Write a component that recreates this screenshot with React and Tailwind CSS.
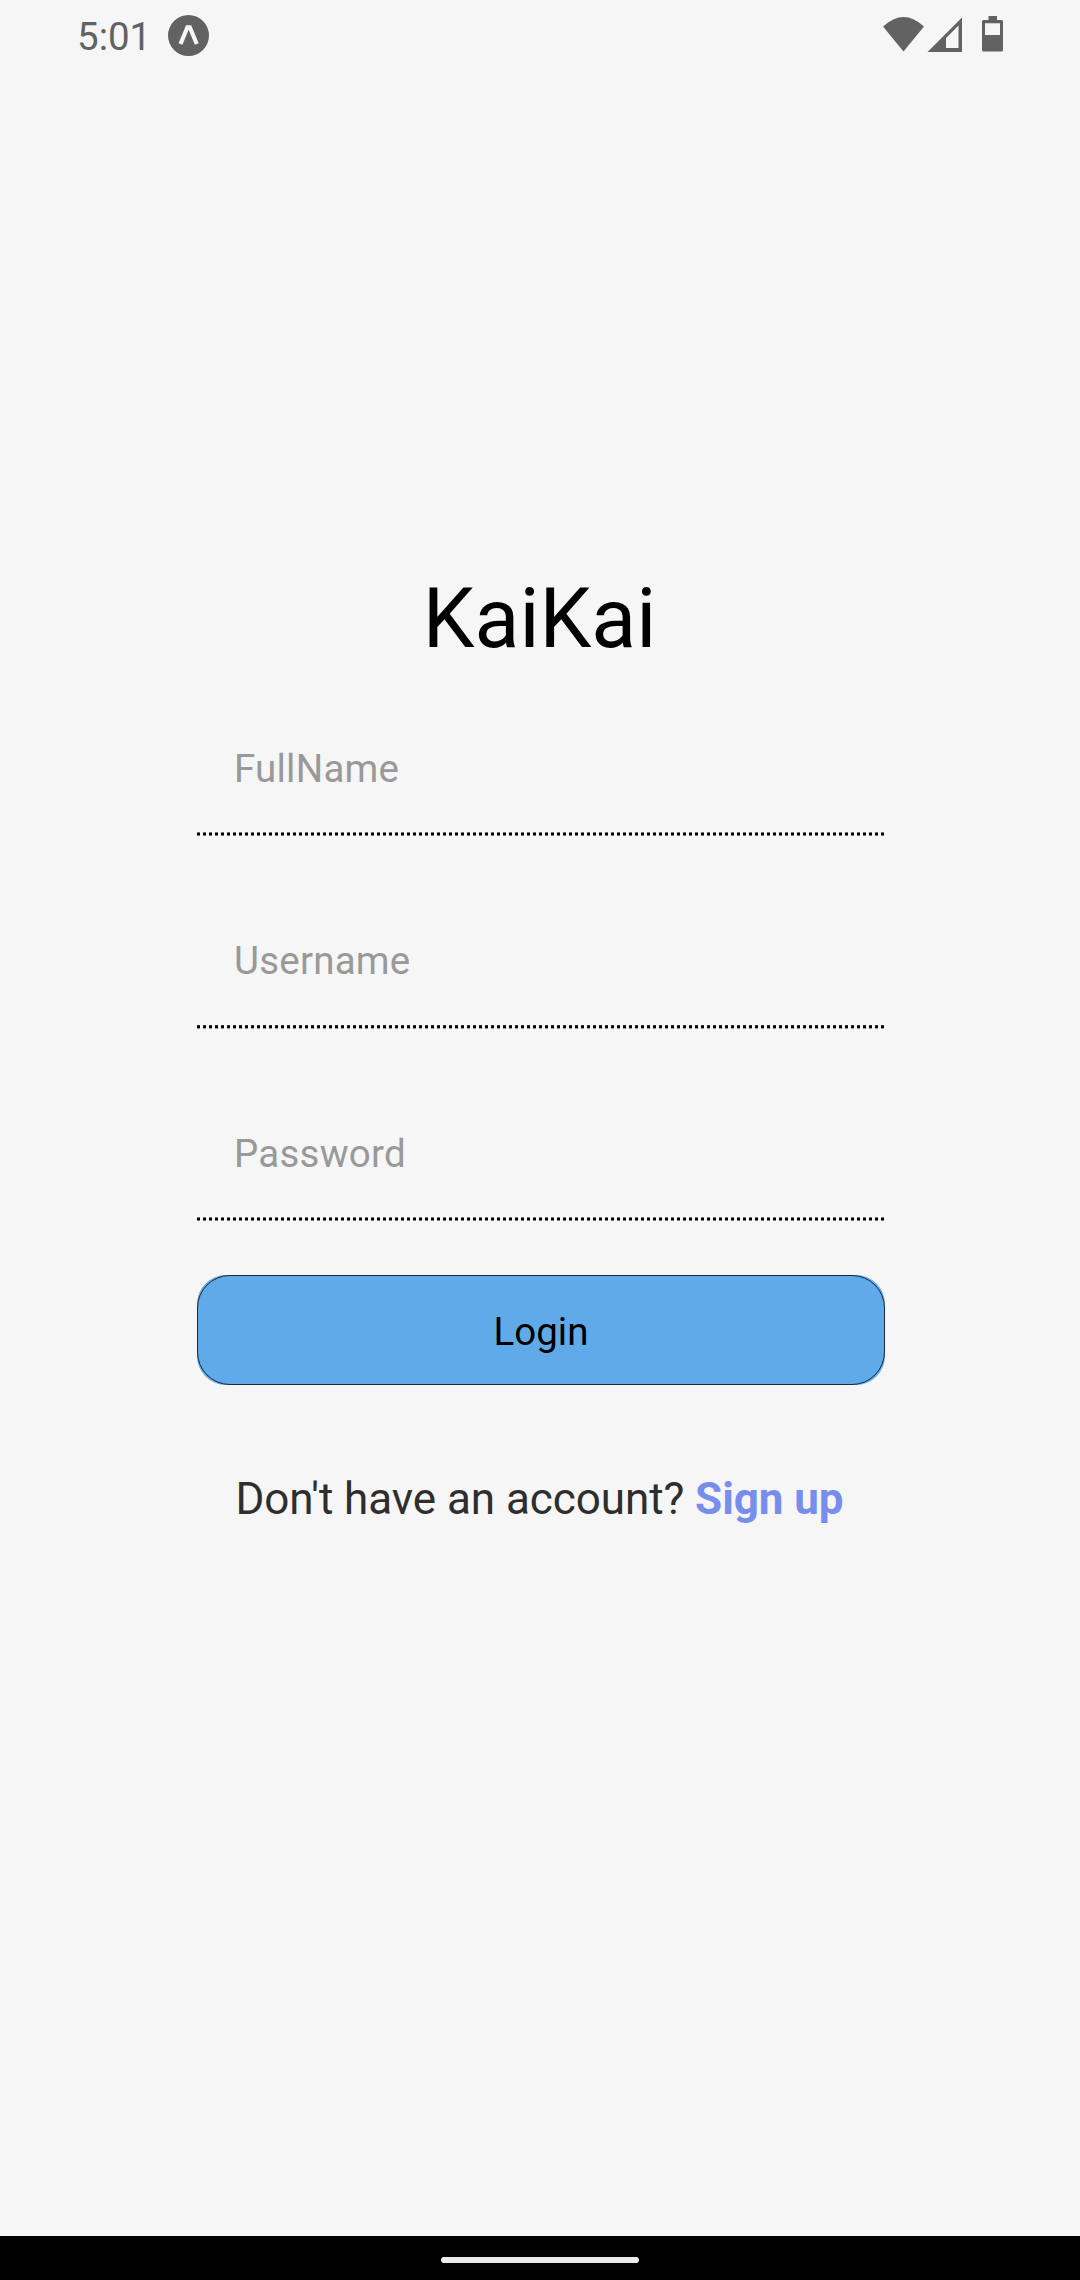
const DottedLine = ({ soft }) => (
  <div
    className={
      "h-1 w-full bg-[repeating-linear-gradient(to_right,#000_0_3px,transparent_3px_6px)] " +
      (soft
        ? "[mask-image:linear-gradient(#000000cc_1px,#000_1px,#000_3px,#00000066_3px)]"
        : "[mask-image:linear-gradient(#00000088_1px,#000_1px,#000_3px,#00000088_3px)]")
    }
  />
);

const Field = ({ label, type, tall }) => (
  <div className={`flex w-[688px] flex-col ${tall ? "gap-[42px]" : "gap-[41px]"}`}>
    <input
      type={type}
      placeholder={label}
      className="h-[45px] w-full bg-transparent pl-[37px] text-[38.5px] leading-[45px] tracking-[0.22px] text-black outline-none placeholder:text-[#999999]"
    />
    <DottedLine soft={tall} />
  </div>
);

export default function App() {
  return (
    <div className="flex h-[2280px] w-[1080px] flex-col bg-[#f6f6f6] font-[Roboto,sans-serif]">
      <header className="flex h-[72px] items-start justify-between pl-[77px] pr-[77px] text-[#626262]">
        <div className="flex items-start gap-[17px] pt-[14px]">
          <span className="w-[74px] text-[38.5px] leading-[45px]">5:01</span>
          <svg className="mt-px" width="41" height="41" viewBox="0 0 41 41">
            <circle cx="20.5" cy="20.5" r="20.5" fill="currentColor" />
            <path d="M12.5 29 19.4 12.3h2.4L28.8 29" fill="none" stroke="#f6f6f6" strokeWidth="4.2" />
          </svg>
        </div>
        <svg className="mt-[15px]" width="120" height="38" viewBox="883 15 120 38" fill="currentColor">
          <path d="M883 26.5Q903.5 7.5 924 26.5L903.5 51.5Z" />
          <path fillRule="evenodd" d="M927.5 52 962 17.500V52ZM946 48h12.500V25.500L946 38Z" />
          <path
            fillRule="evenodd"
            d="M988.500 16h8.500v4h4.500q1.500 0 1.500 1.500V50q0 1.500-1.500 1.500h-18q-1.500 0-1.500-1.500V21.500q0-1.500 1.500-1.500h5ZM985 23.300V35h15V23.300Z"
          />
        </svg>
      </header>
      <main className="flex flex-1 flex-col pl-[197px] pt-[496px]">
        <h1 className="w-[685px] text-center text-[82.5px] leading-[101px] text-black">KaiKai</h1>
        <div className="mt-[77px] flex flex-col gap-[102px]">
          <Field label="FullName" type="text" />
          <Field label="Username" type="text" tall />
          <Field label="Password" type="password" />
        </div>
        <button className="mt-[54px] flex h-[110px] w-[688px] rounded-[29px] bg-[#61aaea] text-[38.5px] text-black">
          <span className="h-full w-full rounded-[33px] border border-[#1c2b38] pt-[33px] leading-[45px]">Login</span>
        </button>
        <p className="mt-[88px] w-[685px] text-center text-[44px] leading-[52px] tracking-[-0.06px] text-[#2e2e2e]">
          Don't have an account? <a className="font-bold text-[#788eec]">Sign up</a>
        </p>
      </main>
      <footer className="flex h-[44px] justify-center bg-black pt-[21px]">
        <div className="h-[6px] w-[198px] rounded-full bg-[#ebebeb]" />
      </footer>
    </div>
  );
}
